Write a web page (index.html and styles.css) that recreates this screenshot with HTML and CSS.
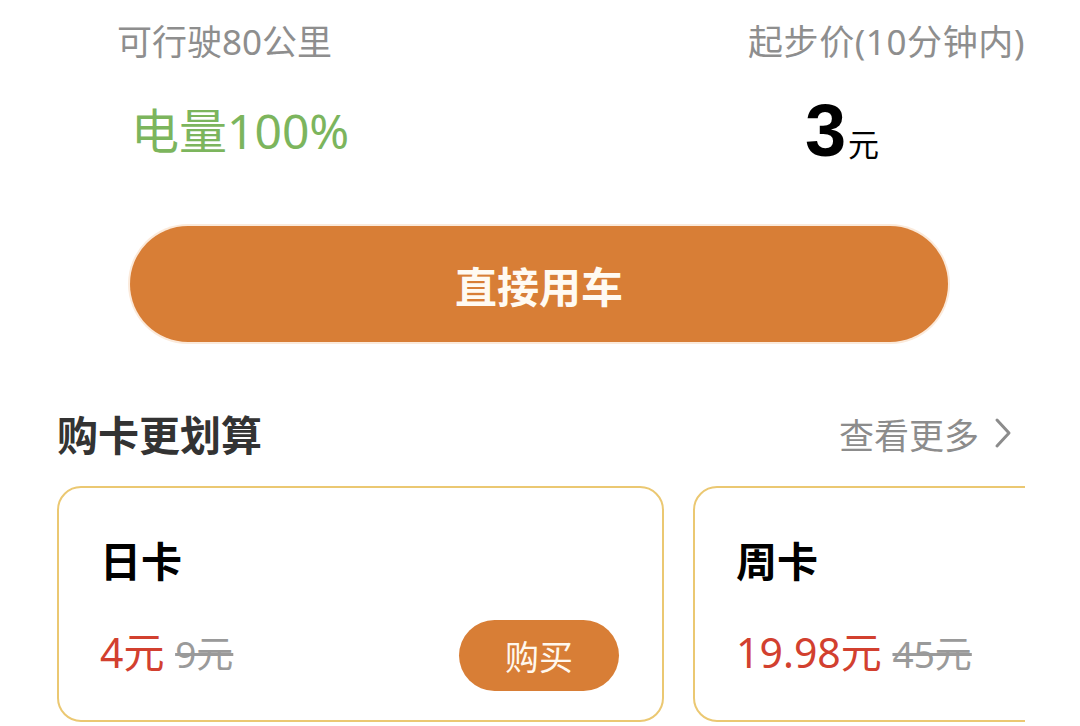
FILE: index.html
```html
<!DOCTYPE html>
<html>
<head>
    <title>用车</title>
    <link rel="stylesheet" href="styles.css">
</head>
<body>

    <div class="stats">
        <div class="stat stat-left">
            <p class="stat-label">可行驶80公里</p>
            <p class="stat-value battery">电量100%</p>
        </div>
        <div class="stat stat-right">
            <p class="stat-label">起步价(10分钟内)</p>
            <p class="stat-value price"><span class="price-num">3</span><span class="price-unit">元</span></p>
        </div>
    </div>

    <button class="main-btn">直接用车</button>

    <div class="section">
        <div class="section-head">
            <h2>购卡更划算</h2>
            <a class="more" href="#">查看更多
                <svg width="20" height="32" viewBox="0 0 20 32"><path d="M4 3 L16 16 L4 29" fill="none" stroke="#8c8c8c" stroke-width="3" stroke-linecap="round" stroke-linejoin="round"/></svg>
            </a>
        </div>

        <div class="cards">
            <div class="card">
                <h3>日卡</h3>
                <div class="card-row">
                    <p class="card-price"><span class="now">4元</span> <span class="old">9元</span></p>
                    <button class="buy-btn">购买</button>
                </div>
            </div>
            <div class="card">
                <h3>周卡</h3>
                <div class="card-row">
                    <p class="card-price"><span class="now">19.98元</span> <span class="old">45元</span></p>
                </div>
            </div>
        </div>
    </div>

</body>
</html>
```

FILE: styles.css
```css
body {
    font-family: "Noto Sans", "Noto Sans CJK SC", sans-serif;
    background-color: #ffffff;
    margin: 0;
    padding: 0;
    overflow: hidden;
}

p, h2, h3 {
    margin: 0;
}

.stats {
    display: flex;
    justify-content: space-between;
    padding: 20px 55px 0 117px;
}

.stat-label {
    font-size: 35px;
    line-height: 44px;
    color: #8e8e8e;
}

.stat-right .stat-label {
    letter-spacing: 0.6px;
}

.stat-value {
    margin-top: 32px;
    height: 70px;
    line-height: 70px;
}

.battery {
    margin-left: 14px;
    font-size: 48px;
    color: #7cb55d;
}

.price {
    margin-left: 57px;
    color: #000000;
}

.price-num {
    font-family: "Liberation Sans", Arial, sans-serif;
    font-weight: bold;
    font-size: 74px;
}

.price-unit {
    font-size: 31px;
    margin-left: 2px;
}

.main-btn {
    display: block;
    margin: 60px 0 0 130px;
    width: 818px;
    height: 116px;
    border: none;
    border-radius: 58px;
    background-color: #d87e36;
    box-shadow: 0 0 0 2px #fbeadb;
    color: #fffaf2;
    font-family: "Noto Sans CJK SC", sans-serif;
    font-size: 42px;
    font-weight: bold;
    cursor: pointer;
}

.section {
    padding: 63px 55px 0 57px;
}

.section-head {
    display: flex;
    justify-content: space-between;
    align-items: center;
    height: 56px;
}

.section-head h2 {
    font-size: 41px;
    font-weight: bold;
    color: #333333;
}

.more {
    display: flex;
    align-items: center;
    gap: 14px;
    font-size: 35px;
    color: #8c8c8c;
    text-decoration: none;
    margin-right: 12px;
}

.cards {
    display: flex;
    gap: 29px;
    margin-top: 25px;
    overflow: hidden;
}

.card {
    flex-shrink: 0;
    width: 607px;
    height: 236px;
    box-sizing: border-box;
    border: 2px solid #ebc872;
    border-radius: 24px;
    padding: 45px 43px 0 41px;
}

.card h3 {
    font-size: 41px;
    line-height: 56px;
    font-weight: bold;
    color: #000000;
}

.card-row {
    display: flex;
    justify-content: space-between;
    align-items: center;
    margin-top: 31px;
    height: 71px;
}

.card-price {
    font-size: 41px;
    line-height: 60px;
    margin-top: -6px;
}

.now {
    color: #d2402f;
}

.old {
    font-size: 37px;
    color: #9a9a9a;
    text-decoration: line-through;
}

.buy-btn {
    width: 160px;
    height: 71px;
    border: none;
    border-radius: 36px;
    background-color: #d87e36;
    color: #fff8ee;
    font-family: "Noto Sans CJK SC", sans-serif;
    font-size: 34px;
    cursor: pointer;
}
```
